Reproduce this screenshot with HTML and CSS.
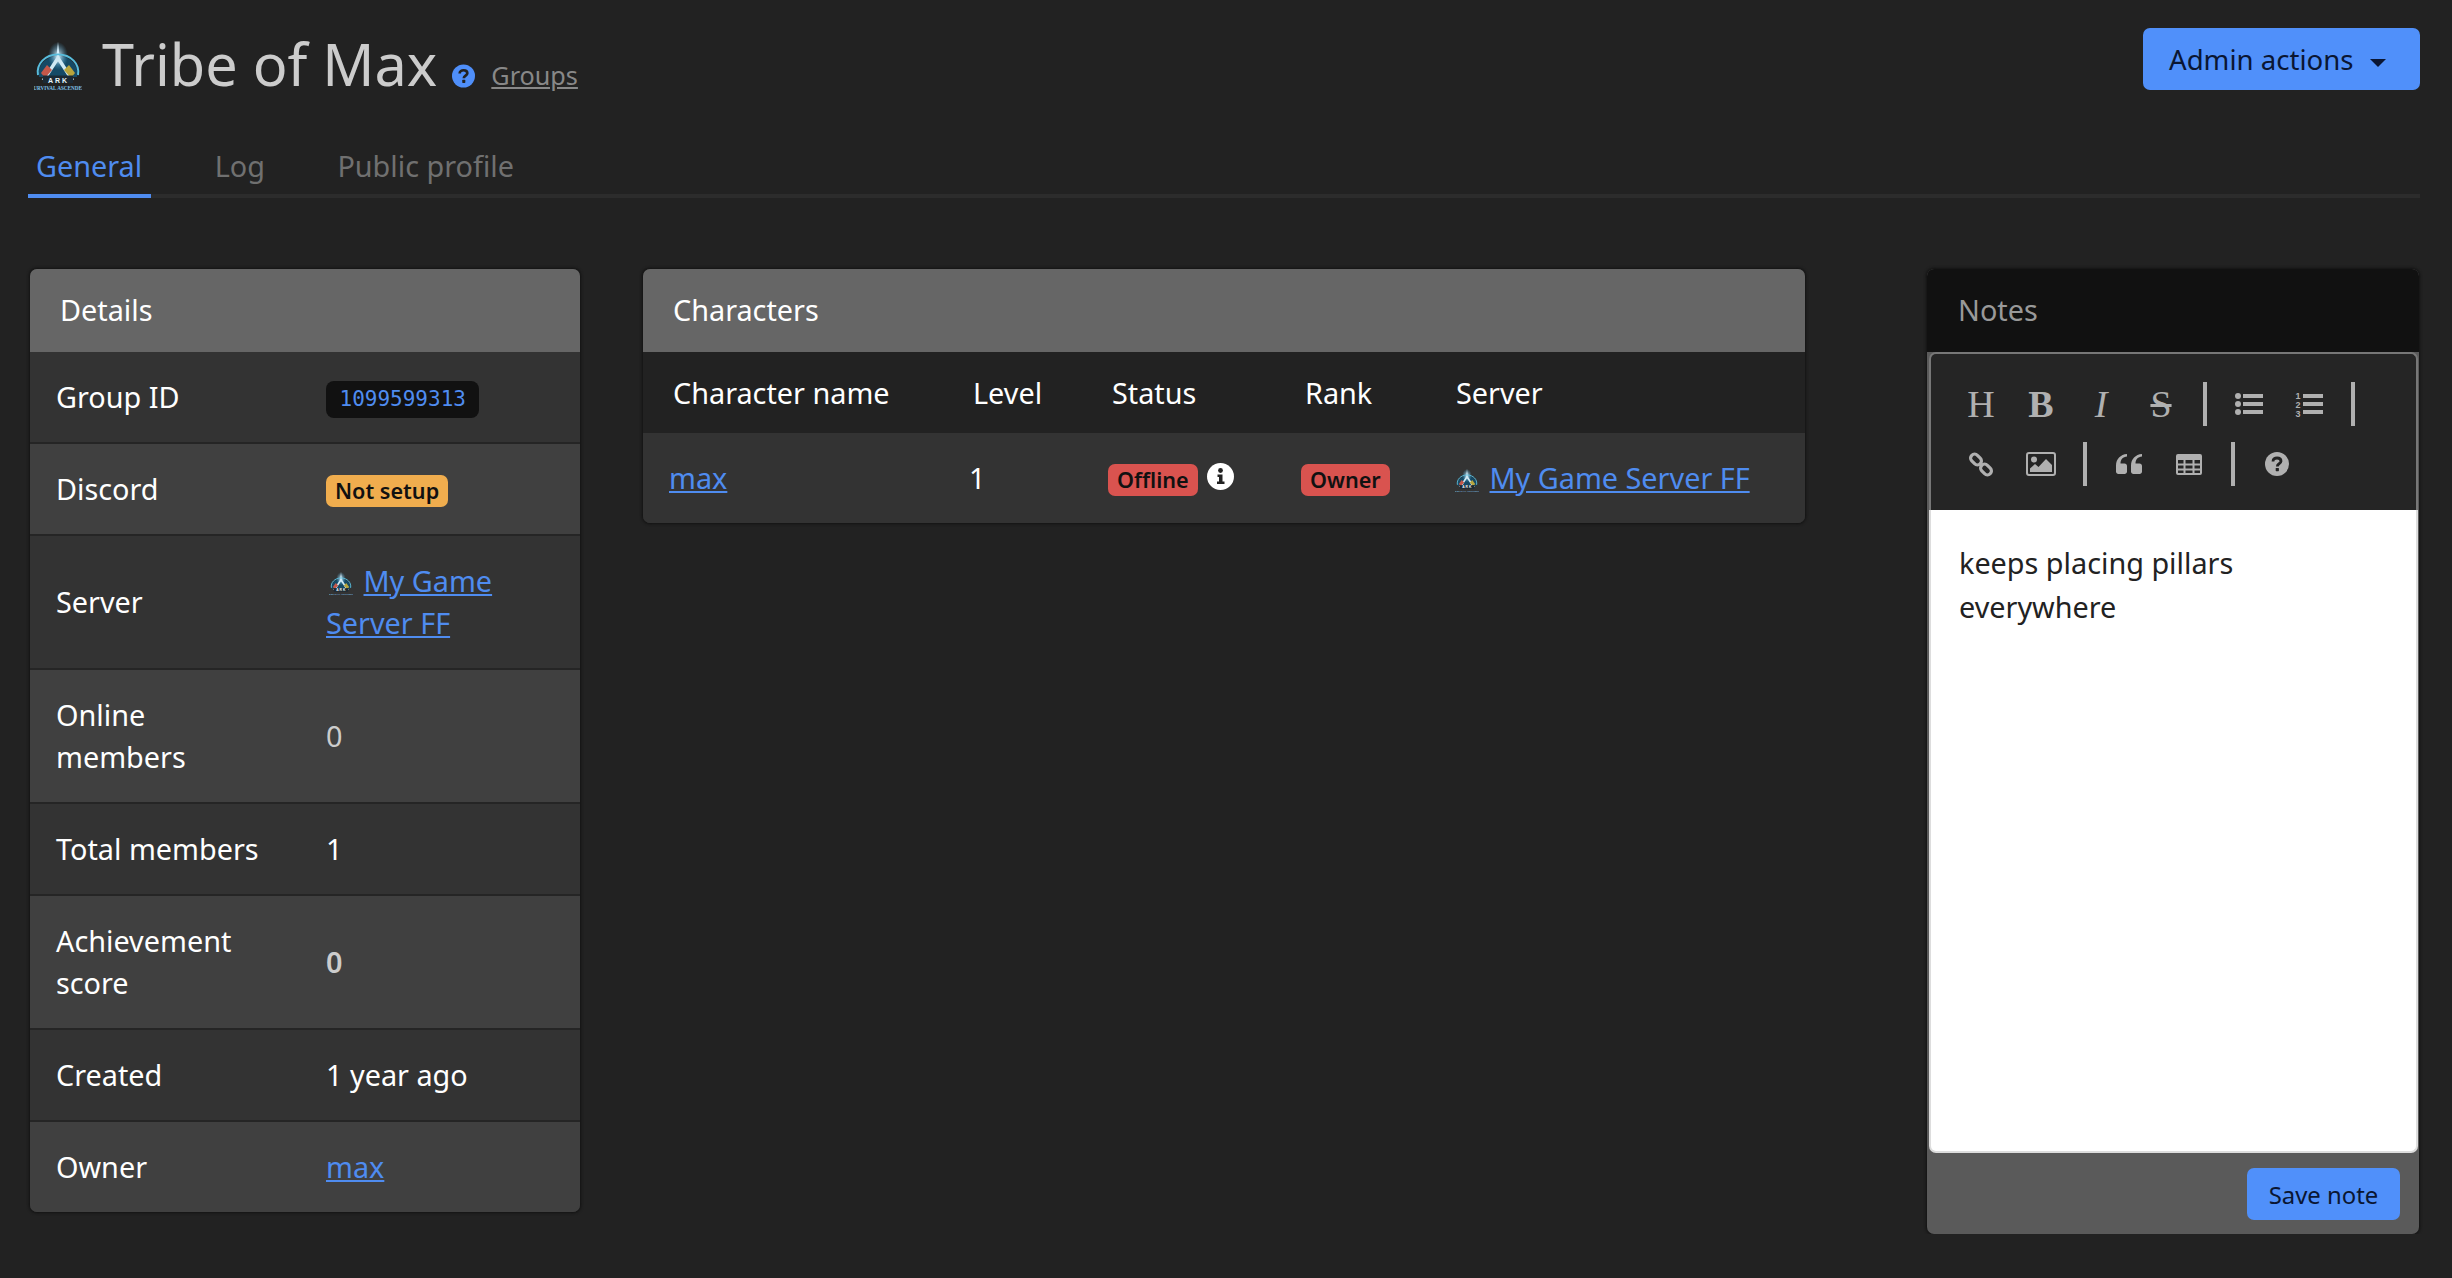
FILE: index.html
```html
<!DOCTYPE html>
<html lang="en">
<head>
    <meta charset="UTF-8">
    <meta name="viewport" content="width=device-width, initial-scale=1.0">
    <title>Tribe of Max</title>
    <link rel="stylesheet" href="styles.css">
</head>
<body>
    <svg class="defs" width="0" height="0">
        <defs>
            <radialGradient id="glow">
                <stop offset="0" stop-color="#e6f7ff"/>
                <stop offset="1" stop-color="#3f9fd0" stop-opacity="0"/>
            </radialGradient>
            <symbol id="ark-logo" viewBox="0 0 48 50">
                <path d="M5 35C3 23 12 14 24 14C36 14 45 23 43 35Z" fill="#154a66"/>
                <ellipse cx="24" cy="14" rx="10" ry="14" fill="url(#glow)"/>
                <path d="M24 0L25.300 12L24 22L22.700 12Z" fill="#d8f2ff"/>
                <path d="M4 33C2 22 11 12.500 24 12.500C37 12.500 46 22 44 33" fill="none" stroke="#58bcdc" stroke-width="2"/>
                <path d="M24 16L37 36H11Z" fill="none" stroke="#cfe9f4" stroke-width="3.500"/>
                <path d="M13 23L7 31L11 36L18 28Z" fill="#c4584a"/>
                <path d="M35 23L41 31L37 36L30 28Z" fill="#b9a53c"/>
                <rect x="9" y="33.500" width="30" height="7.500" fill="#1b2a35"/>
                <text class="logo-ark" x="24.500" y="40.500" text-anchor="middle">ARK</text>
                <text class="logo-sub" x="24" y="47.500" text-anchor="middle">SURVIVAL ASCENDED</text>
            </symbol>
            <symbol id="help" viewBox="0 0 24 24">
                <circle cx="12" cy="12" r="12" fill="currentColor"/>
                <path d="M8 9.400C8 6.900 10 6 12 6C14.200 6 16 7.200 16 9.200C16 11.600 12.300 11.800 12.300 14.400" fill="none" stroke="#222" stroke-width="2.800"/>
                <rect x="10.700" y="16" width="3.200" height="3.200" rx=".6" fill="#222"/>
            </symbol>
        </defs>
    </svg>

    <header class="page-head">
        <div class="title-wrap">
            <svg class="title-logo"><use href="#ark-logo"/></svg>
            <h1>Tribe of Max</h1>
            <svg class="help-icon"><use href="#help"/></svg>
            <a class="groups-link" href="#">Groups</a>
        </div>
        <button class="btn btn-admin" type="button">Admin actions<span class="caret"></span></button>
    </header>

    <nav class="tabs">
        <a class="tab active" href="#">General</a>
        <a class="tab" href="#">Log</a>
        <a class="tab" href="#">Public profile</a>
    </nav>

    <main class="columns">
        <section class="panel">
            <div class="panel-head">Details</div>
            <table class="details">
                <colgroup><col class="col-label"><col></colgroup>
                <tr><td>Group ID</td><td><code class="id-tag">1099599313</code></td></tr>
                <tr><td>Discord</td><td><span class="badge badge-warn">Not setup</span></td></tr>
                <tr><td>Server</td><td><svg class="mini-logo"><use href="#ark-logo"/></svg> <a href="#">My Game Server FF</a></td></tr>
                <tr><td>Online members</td><td class="muted">0</td></tr>
                <tr><td>Total members</td><td>1</td></tr>
                <tr><td>Achievement score</td><td class="muted strong">0</td></tr>
                <tr><td>Created</td><td>1 year ago</td></tr>
                <tr><td>Owner</td><td><a href="#">max</a></td></tr>
            </table>
        </section>

        <section class="panel panel-chars">
            <div class="panel-head">Characters</div>
            <table class="chars">
                <colgroup><col class="c1"><col class="c2"><col class="c3"><col class="c4"><col></colgroup>
                <thead>
                    <tr><th>Character name</th><th>Level</th><th>Status</th><th>Rank</th><th>Server</th></tr>
                </thead>
                <tbody>
                    <tr>
                        <td><a href="#">max</a></td>
                        <td>1</td>
                        <td><span class="badge badge-danger">Offline</span>
                            <svg class="info-icon" viewBox="0 0 27 27">
                                <circle cx="13.500" cy="13.500" r="13.500" fill="#fff"/>
                                <circle cx="13.500" cy="7.500" r="2.400" fill="#222"/>
                                <path d="M10.500 11.500H15.500V18.500H17.500V21H10V18.500H12V14H10.500Z" fill="#222"/>
                            </svg>
                        </td>
                        <td><span class="badge badge-danger">Owner</span></td>
                        <td><svg class="mini-logo"><use href="#ark-logo"/></svg> <a href="#">My Game Server FF</a></td>
                    </tr>
                </tbody>
            </table>
        </section>

        <section class="panel panel-notes">
            <div class="panel-head">Notes</div>
            <div class="editor">
                <div class="toolbar">
                    <span class="tool glyph">H</span>
                    <span class="tool glyph glyph-b">B</span>
                    <span class="tool glyph glyph-i">I</span>
                    <span class="tool glyph glyph-s">S</span>
                    <i class="sep"></i>
                    <span class="tool">
                        <svg width="28" height="22" viewBox="0 0 28 22" fill="currentColor">
                            <circle cx="3" cy="3" r="3"/><circle cx="3" cy="11" r="3"/><circle cx="3" cy="19" r="3"/>
                            <rect x="8" y="1" width="20" height="4"/><rect x="8" y="9" width="20" height="4"/><rect x="8" y="17" width="20" height="4"/>
                        </svg>
                    </span>
                    <span class="tool">
                        <svg width="28" height="27" viewBox="0 0 28 27" fill="currentColor">
                            <text class="ol-num" x="3" y="8" text-anchor="middle">1</text>
                            <text class="ol-num" x="3" y="17" text-anchor="middle">2</text>
                            <text class="ol-num" x="3" y="26" text-anchor="middle">3</text>
                            <rect x="8" y="3" width="20" height="4"/><rect x="8" y="11" width="20" height="4"/><rect x="8" y="19" width="20" height="4"/>
                        </svg>
                    </span>
                    <i class="sep"></i>
                    <span class="tool">
                        <svg width="26" height="25" viewBox="0 0 26 25" fill="none" stroke="currentColor" stroke-width="3.200">
                            <rect x="-6" y="-4" width="12" height="8" rx="4" transform="translate(8 7.500) rotate(45)"/>
                            <rect x="-6" y="-4" width="12" height="8" rx="4" transform="translate(18 17.500) rotate(45)"/>
                        </svg>
                    </span>
                    <span class="tool">
                        <svg width="30" height="24" viewBox="0 0 30 24" fill="currentColor">
                            <rect x="1" y="1" width="28" height="22" rx="2" fill="none" stroke="currentColor" stroke-width="2"/>
                            <circle cx="8" cy="7.500" r="3"/>
                            <path d="M4 20V16.500L9 12L12.500 15L20 7L26 13V20Z"/>
                        </svg>
                    </span>
                    <i class="sep"></i>
                    <span class="tool">
                        <svg width="26" height="20" viewBox="0 0 26 20" fill="currentColor">
                            <path d="M11 2.500V0C4.500 .5 0 5 0 11.500V17.500C0 19 1 20 2.500 20H8.500C10 20 11 19 11 17.500V12C11 10.500 10 9.500 8.500 9.500H4.500C4.500 5.500 7 2.800 11 2.500Z"/>
                            <path d="M26 2.500V0C19.500 .5 15 5 15 11.500V17.500C15 19 16 20 17.500 20H23.500C25 20 26 19 26 17.500V12C26 10.500 25 9.500 23.500 9.500H19.500C19.500 5.500 22 2.800 26 2.500Z"/>
                        </svg>
                    </span>
                    <span class="tool">
                        <svg width="26" height="21" viewBox="0 0 26 21" fill="currentColor">
                            <path fill-rule="evenodd" d="M2 0H24A2 2 0 0 1 26 2V19A2 2 0 0 1 24 21H2A2 2 0 0 1 0 19V2A2 2 0 0 1 2 0ZM2 6V9.500H7.500V6ZM9.500 6V9.500H16.500V6ZM18.500 6V9.500H24V6ZM2 11.500V14.500H7.500V11.500ZM9.500 11.500V14.500H16.500V11.500ZM18.500 11.500V14.500H24V11.500ZM2 16.500V19H7.500V16.500ZM9.500 16.500V19H16.500V16.500ZM18.500 16.500V19H24V16.500Z"/>
                        </svg>
                    </span>
                    <i class="sep"></i>
                    <span class="tool"><svg class="tool-help"><use href="#help"/></svg></span>
                </div>
                <div class="note-text">keeps placing pillars everywhere</div>
            </div>
            <div class="panel-foot">
                <button class="btn btn-save" type="button">Save note</button>
            </div>
        </section>
    </main>
</body>
</html>
```

FILE: styles.css
```css
body {
    margin: 0;
    padding: 0 32px 0 28px;
    background: #222;
    color: #fff;
    font-family: "Noto Sans", "Open Sans", sans-serif;
    font-size: 28.800px;
    line-height: 42px;
}
.defs {
    position: absolute;
}
a {
    color: #4f8cf0;
}
.logo-ark {
    font-family: "Liberation Sans", sans-serif;
    font-size: 7px;
    font-weight: bold;
    letter-spacing: 2px;
    fill: #e8f4f8;
}
.logo-sub {
    font-family: "Liberation Serif", serif;
    font-size: 5.200px;
    font-weight: bold;
    fill: #7fc0e8;
}

/* page head */
.page-head {
    display: flex;
    justify-content: space-between;
    align-items: flex-start;
    padding-top: 28px;
    height: 145px;
    box-sizing: border-box;
}
.title-wrap {
    display: flex;
    align-items: flex-start;
}
.title-logo {
    width: 48px;
    height: 50px;
    margin: 14px 20px 0 6px;
}
h1 {
    margin: 0;
    font-size: 57.600px;
    line-height: 72px;
    font-weight: 400;
    color: #ccc;
}
.help-icon {
    width: 23px;
    height: 24px;
    margin: 36px 16px 0 15px;
    color: #4f8ffa;
}
.groups-link {
    margin-top: 26px;
    font-size: 25.200px;
    color: #888;
}
.btn {
    border: 0;
    background: #5090fa;
    color: #0a1633;
    font-family: inherit;
    border-radius: 7px;
}
.btn-admin {
    width: 277px;
    height: 62px;
    padding: 0 0 0 26px;
    text-align: left;
    font-size: 27.600px;
}
.caret {
    display: inline-block;
    margin-left: 16px;
    vertical-align: middle;
    border: 8px solid transparent;
    border-top-color: #0a1633;
    border-bottom: 0;
}

/* tabs */
.tabs {
    display: flex;
    border-bottom: 4px solid #2c2c2c;
    height: 49px;
}
.tab {
    padding: 0 9px 0 8px;
    margin-right: 55.500px;
    height: 49px;
    color: #707070;
    text-decoration: none;
}
.tab.active {
    color: #4f8cf0;
    border-bottom: 4px solid #4f8cf0;
}

/* panels */
.columns {
    display: flex;
    align-items: flex-start;
    padding: 71px 0 0 2px;
}
.panel {
    width: 550px;
    border-radius: 7px;
    overflow: hidden;
    box-shadow: 0 0 3px 1px #111;
    background: #333;
}
.panel-chars {
    width: 1162px;
    margin: 0 122px 0 63px;
}
.panel-notes {
    width: 492px;
    background: #5a5a5a;
}
.panel-head {
    height: 83px;
    padding: 0 30px;
    line-height: 82px;
    background: #666;
}
table {
    width: 100%;
    border-collapse: collapse;
    table-layout: fixed;
}
.col-label {
    width: 270px;
}
.details td {
    padding: 24px 26px;
    border-bottom: 2px solid #252525;
}
.details tr:nth-child(even) td {
    background: #404040;
}
.details tr:last-child td {
    border-bottom: 0;
}
.muted {
    color: #ccc;
}
.strong {
    font-weight: 600;
}
.id-tag {
    display: inline-block;
    padding: 0 13.500px;
    height: 37px;
    line-height: 37px;
    vertical-align: top;
    margin-top: 5px;
    font-family: "DejaVu Sans Mono", monospace;
    font-size: 21px;
    color: #4f8cf0;
    background: #111;
    border-radius: 8px;
}
.badge {
    display: inline-block;
    height: 32px;
    line-height: 32px;
    padding: 0 9px;
    vertical-align: top;
    margin-top: 7px;
    font-size: 21.600px;
    font-weight: 600;
    color: #111;
    border-radius: 7px;
}
.badge-warn {
    background: #f0ad4e;
}
.badge-danger {
    background: #d9534f;
}
.mini-logo {
    width: 24px;
    height: 24px;
    margin: 0 3px;
    vertical-align: -4px;
}
.c1 { width: 300px; }
.c2 { width: 139px; }
.c3 { width: 193px; }
.c4 { width: 151px; }
.chars th {
    padding: 19.500px 0 19.500px 30px;
    text-align: left;
    font-weight: 400;
    background: #222;
}
.chars td {
    padding: 24px 0 24px 26px;
    background: #333;
}
.info-icon {
    width: 27px;
    height: 27px;
    margin-left: 2px;
    vertical-align: top;
    margin-top: 6px;
}

/* notes */
.panel-notes .panel-head {
    background: #111;
    color: #999;
    padding: 0 31px;
}
.editor {
    margin: 0 1px 0 2px;
}
.toolbar {
    display: flex;
    flex-wrap: wrap;
    align-items: center;
    align-content: flex-start;
    height: 158px;
    box-sizing: border-box;
    padding: 20px 0 0 20px;
    background: #252525;
    color: #b0b0b0;
    border: 2px solid #777;
    border-bottom: 0;
    border-radius: 7px 7px 0 0;
}
.tool {
    display: flex;
    justify-content: center;
    align-items: center;
    width: 60px;
    height: 60px;
}
.glyph {
    font-family: "Liberation Serif", serif;
    font-size: 38px;
}
.glyph-b {
    font-weight: bold;
}
.glyph-i {
    font-style: italic;
}
.glyph-s {
    text-decoration: line-through;
}
.ol-num {
    font-family: "Liberation Sans", sans-serif;
    font-size: 9px;
    font-weight: bold;
}
.tool-help {
    width: 24px;
    height: 24px;
}
.sep {
    width: 4px;
    height: 44px;
    margin: 0 12px;
    background: #b0b0b0;
}
.note-text {
    height: 643px;
    box-sizing: border-box;
    padding: 31px 80px 0 28px;
    color: #222;
    background: #fff;
    line-height: 44px;
    border: 2px solid #ddd;
    border-top: 0;
    border-radius: 0 0 7px 7px;
}
.panel-foot {
    display: flex;
    justify-content: flex-end;
    height: 81px;
    padding: 15px 19px 0 0;
    box-sizing: border-box;
}
.btn-save {
    width: 153px;
    height: 52px;
    font-size: 23.900px;
}
```
